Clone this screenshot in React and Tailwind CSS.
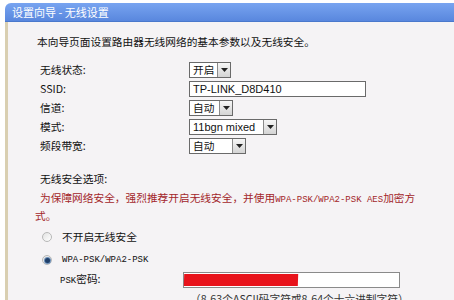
import React from "react";

function Arrow() {
  return (
    <span className="flex w-[13px] items-center justify-center border-l border-[#8a8a8a] bg-gradient-to-b from-[#f6f6f6] to-[#d4d4d4]">
      <svg width="7" height="4" viewBox="0 0 7 4">
        <path d="M0 0h7L3.5 4z" fill="#222" />
      </svg>
    </span>
  );
}

function Select({ w, children }) {
  return (
    <div className={`flex h-[16px] items-stretch border border-[#6a6a6a] bg-white ${w}`}>
      <span className="flex-1 whitespace-nowrap pl-[3px] leading-[14px]">{children}</span>
      <Arrow />
    </div>
  );
}

function Radio({ checked }) {
  return (
    <span className="flex h-[10px] w-[10px] items-center justify-center rounded-full border border-[#b8b8b8] bg-gradient-to-br from-[#e2e2e2] to-[#ffffff]">
      {checked && <span className="h-[5px] w-[5px] rounded-full bg-[#1f3f6a] ring-1 ring-[#6d8fb8]" />}
    </span>
  );
}

export default function App() {
  return (
    <div className="h-[300px] w-[454px] overflow-hidden bg-white pl-[5px] pt-[3px] font-['Noto_Sans_CJK_SC',sans-serif] text-[10.7px] text-[#111]">
      {/* title bar */}
      <div className="h-[19px] rounded-tl-[6px] border-b border-[#4a78cc] bg-gradient-to-b from-[#78a4f0] to-[#5987de] pl-[7px] text-[11px] leading-[18px] text-white">
        设置向导 - 无线设置
      </div>

      <div className="h-[280px] border-l-[3px] border-[#d9cfb1] bg-[#f5f3f5] pt-[12px]">
        <p className="pl-[29px] leading-[16px]">本向导页面设置路由器无线网络的基本参数以及无线安全。</p>

        <div className="mt-[12px] grid grid-cols-[149px_1fr] gap-y-[3px] pl-[32px] leading-[16px]">
          <span>无线状态:</span>
          <Select w="w-[42px]">开启</Select>
          <span>SSID:</span>
          <div className="h-[16px] w-[177px] border border-[#6a6a6a] bg-white pl-[3px] font-['Liberation_Sans',sans-serif] text-[11px] leading-[14px]">
            TP-LINK_D8D410
          </div>
          <span>信道:</span>
          <Select w="w-[44px]">自动</Select>
          <span>模式:</span>
          <Select w="w-[88px]">
            <span className="font-['Liberation_Sans',sans-serif] text-[11px]">11bgn mixed</span>
          </Select>
          <span>频段带宽:</span>
          <Select w="w-[57px]">自动</Select>
        </div>

        <p className="mt-[17px] pl-[32px] leading-[16px]">无线安全选项:</p>
        <div className="mt-[3px] leading-[16px] text-[#a3262a]">
          <p className="whitespace-nowrap pl-[32px]">
            为保障网络安全，强烈推荐开启无线安全，并使用
            <span className="font-['Liberation_Mono',monospace] text-[9px]">WPA-PSK/WPA2-PSK AES</span>
            加密方
          </p>
          <p className="pl-[27px]">式。</p>
        </div>

        <div className="mt-[5px] flex h-[16px] items-center gap-[10px] pl-[34px]">
          <Radio />
          <span className="leading-[16px]">不开启无线安全</span>
        </div>
        <div className="mt-[7px] flex h-[16px] items-center gap-[10px] pl-[34px]">
          <Radio checked />
          <span className="font-['Liberation_Mono',monospace] text-[9px] leading-[16px]">WPA-PSK/WPA2-PSK</span>
        </div>

        <div className="mt-[4px] flex h-[16px] items-center pl-[52px]">
          <span className="w-[123px] leading-[16px]">
            <span className="font-['Liberation_Mono',monospace] text-[9px]">PSK</span>密码:
          </span>
          <div className="relative h-[16px] w-[217px] border border-[#8a8a8a] bg-white">
            <div className="absolute left-0 top-[1px] h-[12px] w-[114px] -skew-x-2 bg-[#e8131b]" />
          </div>
        </div>

        <p className="mt-[4px] pl-[182px] leading-[14px] text-[#333]">（8-63个ASCII码字符或8-64个十六进制字符）</p>
      </div>
    </div>
  );
}
